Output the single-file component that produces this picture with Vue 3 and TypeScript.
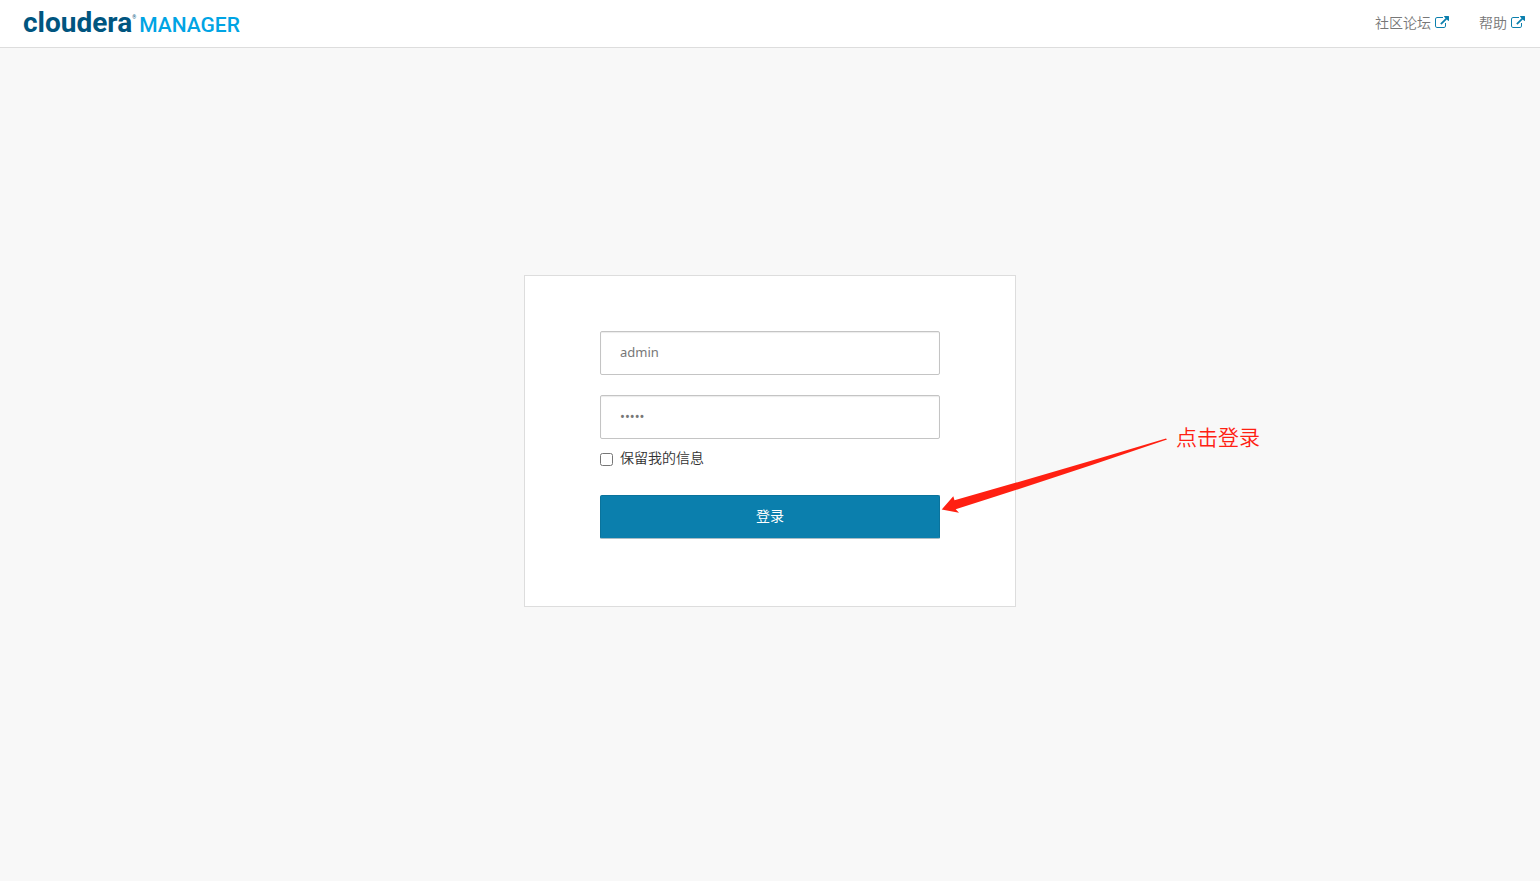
<script setup lang="ts">
import { ref } from 'vue'

interface NavLink {
  label: string
  href: string
}

const links: NavLink[] = [
  { label: '社区论坛', href: '#community' },
  { label: '帮助', href: '#help' },
]

const username = ref('admin')
const password = ref('admin')
const remember = ref(false)
</script>

<template>
  <div class="page">
    <header class="topbar">
      <a class="brand" href="#home">
        <span class="brand-name">cloudera</span>
        <span class="brand-mark">®</span>
        <span class="brand-product">MANAGER</span>
      </a>
      <nav class="links">
        <a v-for="link in links" :key="link.href" class="link" :href="link.href">
          <span>{{ link.label }}</span>
          <svg class="external" viewBox="0 0 1792 1536" aria-hidden="true">
            <path
              d="M1408 928v320q0 119-84.5 203.5T1120 1536H288q-119 0-203.5-84.5T0 1248V416q0-119 84.5-203.5T288 128h704q14 0 23 9t9 23v64q0 14-9 23t-23 9H288q-66 0-113 47t-47 113v832q0 66 47 113t113 47h832q66 0 113-47t47-113V928q0-14 9-23t23-9h64q14 0 23 9t9 23zm384-864v512q0 26-19 45t-45 19-45-19l-176-176-652 652q-10 10-23 10t-23-10L695 983q-10-10-10-23t10-23l652-652-176-176q-19-19-19-45t19-45 45-19h512q26 0 45 19t19 45z"
            />
          </svg>
        </a>
      </nav>
    </header>

    <main class="content">
      <div class="card">
        <form class="form" @submit.prevent>
          <input v-model="username" class="field" type="text" aria-label="用户名" />
          <input v-model="password" class="field" type="password" aria-label="密码" />
          <label class="remember" for="remember">
            <input id="remember" v-model="remember" class="check" type="checkbox" />
            <span class="remember-text">保留我的信息</span>
          </label>
          <button class="submit" type="submit">登录</button>
        </form>
        <div class="callout">
          <svg class="arrow" width="226" height="78" viewBox="0 0 226 78" aria-hidden="true">
            <path d="M0.7 73.5 12.3 60.3 13.5 64.3Q120 34 225 2.5L226 3.5Q120 40 14.7 73.3L18 76.7Z" />
          </svg>
          <span class="callout-text">点击登录</span>
        </div>
      </div>
    </main>
  </div>
</template>

<style>
body {
  margin: 0;
}
</style>

<style scoped>
.page {
  display: flex;
  flex-direction: column;
  min-height: 100vh;
  background: #f8f8f8;
  color: #333;
  font-family: 'Noto Sans', 'Noto Sans CJK SC', sans-serif;
  font-size: 14px;
  line-height: 20px;
}

.topbar {
  display: flex;
  justify-content: space-between;
  align-items: center;
  box-sizing: border-box;
  height: 48px;
  padding: 0 15px 4px 23px;
  border-bottom: 1px solid #ddd;
  background: #fff;
}

.brand {
  display: flex;
  align-items: baseline;
  padding-top: 4px;
  font-family: Roboto, sans-serif;
  line-height: 32px;
  text-decoration: none;
}

.brand-name {
  color: #00557f;
  font-size: 28px;
  font-weight: 700;
}

.brand-mark {
  align-self: flex-start;
  width: 7px;
  color: #00557f;
  font-size: 5px;
  line-height: 20px;
}

.brand-product {
  color: #00a4e4;
  font-size: 21px;
  font-weight: 500;
}

.links {
  display: flex;
  gap: 30px;
}

.link {
  display: flex;
  align-items: center;
  gap: 4px;
  color: #777;
  font-family: 'Noto Sans CJK SC', sans-serif;
  font-weight: 350;
  text-decoration: none;
}

.external {
  width: 14px;
  height: 12px;
  fill: #0b7fad;
}

.content {
  display: flex;
  flex: 1;
  justify-content: center;
  align-items: center;
  padding-bottom: 47px;
}

.card {
  position: relative;
  box-sizing: border-box;
  width: 492px;
  padding: 55px 75px 67px;
  border: 1px solid #ddd;
  background: #fff;
}

.form {
  display: flex;
  flex-direction: column;
}

.field {
  box-sizing: border-box;
  width: 100%;
  height: 44px;
  margin: 0 0 20px;
  padding: 0 19px 2px;
  border: 1px solid #c4c4c4;
  border-radius: 2px;
  outline: none;
  background: #fff;
  box-shadow: inset 0 1px 1px rgba(0, 0, 0, 0.08);
  color: #777;
  font-family: 'Noto Sans', 'Noto Sans CJK SC', sans-serif;
  font-size: 13px;
}

.field + .field {
  margin-bottom: 9px;
}

.remember {
  display: flex;
  align-items: center;
  gap: 7px;
  margin-bottom: 27px;
  font-family: 'Noto Sans CJK SC', sans-serif;
  font-weight: 350;
}

.remember-text {
  padding-bottom: 2px;
  line-height: 18px;
}

.check {
  width: 13px;
  height: 13px;
  margin: 2px 0 0;
}

.submit {
  height: 44px;
  padding: 0 0 4px;
  border: 1px solid #0a739c;
  border-bottom-color: #a9bcc5;
  border-radius: 2px;
  background: #0b7fad;
  color: #fff;
  font-family: 'Noto Sans CJK SC', sans-serif;
  font-size: 14px;
}

.callout {
  position: absolute;
  top: 146px;
  left: 416px;
  display: flex;
  align-items: flex-start;
  gap: 9px;
  color: #ff2012;
  font-family: 'Noto Sans CJK SC', sans-serif;
  font-size: 21px;
  font-weight: 350;
  line-height: 28px;
  white-space: nowrap;
}

.arrow {
  margin-top: 14px;
  fill: #ff2012;
}
</style>
